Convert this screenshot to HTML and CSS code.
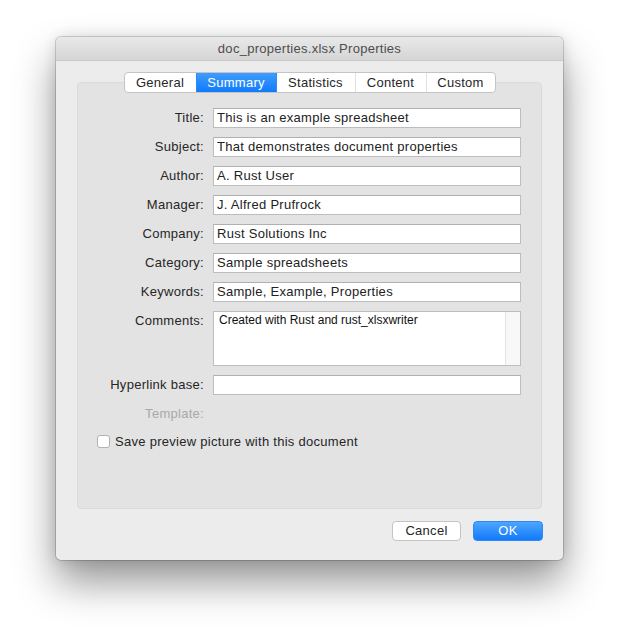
FILE: index.html
```html
<!DOCTYPE html>
<html>
<head>
<meta charset="utf-8">
<link rel="stylesheet" href="styles.css">
</head>
<body>
<div class="window">
  <div class="titlebar">doc_properties.xlsx Properties</div>
  <div class="body">
    <div class="tabs">
      <div class="tab t-general">General</div>
      <div class="tab t-summary selected">Summary</div>
      <div class="tab t-stats">Statistics</div>
      <div class="tab t-content">Content</div>
      <div class="tab t-custom">Custom</div>
    </div>
    <div class="group">
      <div class="form">
        <label class="lbl">Title:</label>
        <div class="field">This is an example spreadsheet</div>
        <label class="lbl">Subject:</label>
        <div class="field">That demonstrates document properties</div>
        <label class="lbl">Author:</label>
        <div class="field">A. Rust User</div>
        <label class="lbl">Manager:</label>
        <div class="field">J. Alfred Prufrock</div>
        <label class="lbl">Company:</label>
        <div class="field">Rust Solutions Inc</div>
        <label class="lbl">Category:</label>
        <div class="field">Sample spreadsheets</div>
        <label class="lbl">Keywords:</label>
        <div class="field">Sample, Example, Properties</div>
        <label class="lbl lbl-top">Comments:</label>
        <div class="textarea">
          <div class="ta-text">Created with Rust and rust_xlsxwriter</div>
          <div class="ta-scroll"></div>
        </div>
        <label class="lbl">Hyperlink base:</label>
        <div class="field"></div>
        <label class="lbl disabled">Template:</label>
        <div class="empty"></div>
        <div class="check-row">
          <span class="checkbox"></span>
          <span class="check-text">Save preview picture with this document</span>
        </div>
      </div>
    </div>
    <div class="buttons">
      <div class="btn cancel">Cancel</div>
      <div class="btn ok">OK</div>
    </div>
  </div>
</div>
</body>
</html>
```
FILE: styles.css
```css
html, body {
  margin: 0;
  padding: 0;
  background: #ffffff;
}
body {
  padding: 37px 0 0 56px;
  height: 635px;
  box-sizing: border-box;
  font-family: "Liberation Sans", Arial, sans-serif;
  font-size: 13px;
  letter-spacing: 0.28px;
  color: #262626;
}
.window {
  width: 507px;
  height: 523px;
  background: #ececec;
  border-radius: 5px;
  box-shadow: 0 0 0 1px rgba(0,0,0,0.16), 0 22px 40px rgba(0,0,0,0.42), 0 0 14px rgba(0,0,0,0.12);
  overflow: hidden;
  display: flex;
  flex-direction: column;
}
.titlebar {
  height: 23px;
  border-bottom: 1px solid #c9c9c9;
  background: linear-gradient(#e9e9e9, #d5d5d5);
  text-align: center;
  line-height: 24px;
  color: #4d4d4d;
  font-size: 13px;
}
.body {
  padding: 11px 21px 0 21px;
  display: flex;
  flex-direction: column;
}
.tabs {
  align-self: center;
  display: flex;
  height: 19px;
  border: 1px solid #c4c4c4;
  border-radius: 4px;
  background: #ffffff;
  overflow: hidden;
  position: relative;
  z-index: 1;
}
.tab {
  line-height: 19px;
  text-align: center;
  border-left: 1px solid #e1e1e1;
  color: #262626;
}
.tab:first-child { border-left: none; }
.t-general { width: 71px; }
.t-summary { width: 79px; }
.t-stats { width: 78px; }
.t-content { width: 70px; }
.t-custom { width: 68px; }
.tab.selected {
  background: linear-gradient(#3f9cfd, #107bfb);
  color: #ffffff;
  border-left-color: #2d8afc;
}
.tab.selected + .tab { border-left-color: #2d8afc; }
.group {
  margin-top: -11px;
  height: 400px;
  background: #e3e3e3;
  border: 1px solid #dadada;
  border-radius: 4px;
  padding: 25px 20px 0 0;
}
.form {
  display: grid;
  grid-template-columns: 126px 308px;
  column-gap: 9px;
  row-gap: 9px;
}
.lbl {
  text-align: right;
  line-height: 20px;
  height: 20px;
  color: #262626;
}
.lbl.disabled { color: #a8a8a8; }
.field {
  box-sizing: border-box;
  height: 20px;
  background: #ffffff;
  border: 1px solid #bdbdbd;
  border-top-color: #b0b0b0;
  padding: 0 3px;
  line-height: 18px;
  color: #222222;
  white-space: nowrap;
}
.empty { height: 20px; }
.textarea {
  box-sizing: border-box;
  height: 55px;
  background: #ffffff;
  border: 1px solid #bdbdbd;
  display: flex;
}
.ta-text {
  flex: 1;
  font-family: "Liberation Sans", Arial, sans-serif;
  font-size: 12px;
  letter-spacing: 0;
  color: #111111;
  padding: 1px 0 0 5px;
  line-height: 14px;
}
.ta-scroll {
  width: 14px;
  background: #f8f8f8;
  border-left: 1px solid #e4e4e4;
}
.check-row {
  grid-column: 1 / -1;
  display: flex;
  align-items: center;
  height: 20px;
  padding-left: 19px;
  margin-top: -2px;
}
.checkbox {
  box-sizing: border-box;
  width: 13px;
  height: 13px;
  border: 1px solid #b2b2b2;
  border-radius: 3px;
  background: #ffffff;
  margin-right: 5px;
}
.check-text { color: #262626; }
.buttons {
  display: flex;
  justify-content: flex-end;
  gap: 12px;
  margin-top: 12px;
  margin-right: -1px;
}
.btn {
  box-sizing: border-box;
  height: 20px;
  line-height: 18px;
  text-align: center;
  border-radius: 4px;
}
.cancel {
  width: 69px;
  background: #ffffff;
  border: 1px solid #c4c4c4;
  color: #262626;
}
.ok {
  width: 70px;
  background: linear-gradient(#4ea6fd, #1179fb);
  border: 1px solid #2d88f7;
  color: #ffffff;
}
```
